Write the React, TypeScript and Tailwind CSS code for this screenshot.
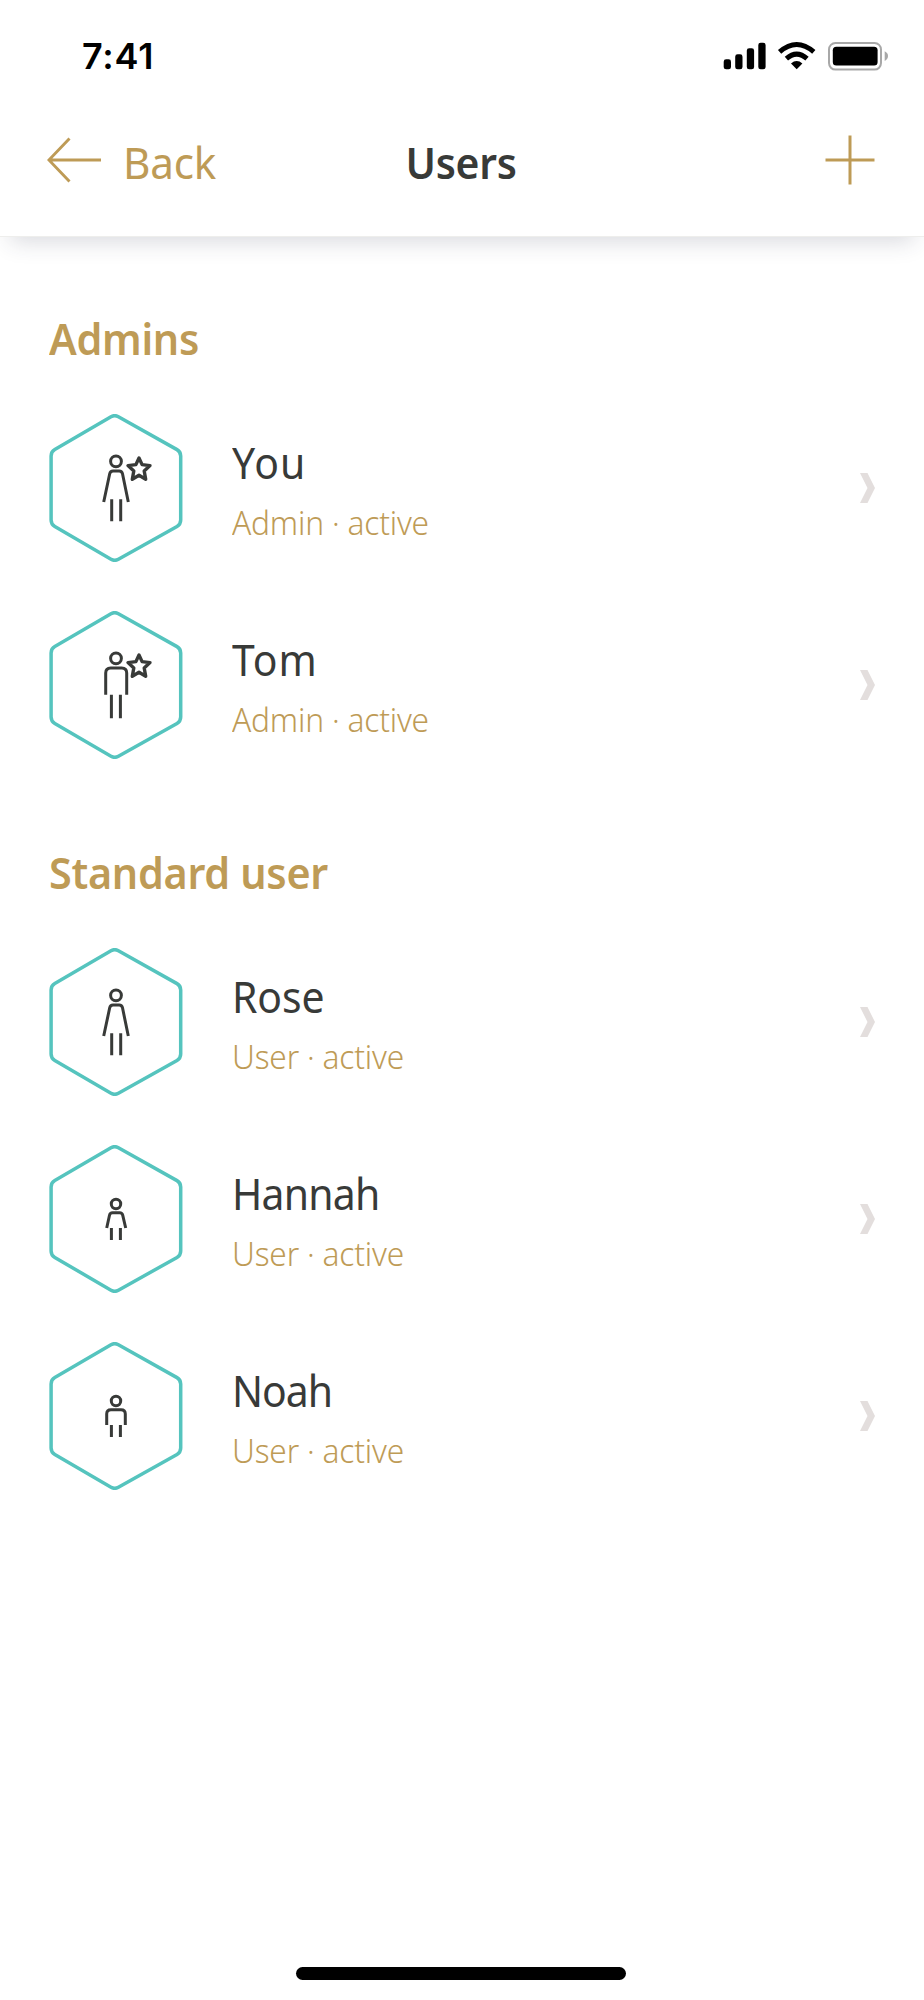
type Figure = "woman" | "man" | "girl" | "boy";

interface User {
  name: string;
  role: string;
  figure: Figure;
  star?: boolean;
  spacing: string;
}

const admins: User[] = [
  { name: "You", role: "Admin · active", figure: "woman", star: true, spacing: "tracking-[1.2px]" },
  { name: "Tom", role: "Admin · active", figure: "man", star: true, spacing: "tracking-[1px]" },
];

const standardUsers: User[] = [
  { name: "Rose", role: "User · active", figure: "woman", spacing: "tracking-[-0.1px]" },
  { name: "Hannah", role: "User · active", figure: "girl", spacing: "tracking-[-0.8px]" },
  { name: "Noah", role: "User · active", figure: "boy", spacing: "tracking-[-1.1px]" },
];

const figures: Record<Figure, { head: [number, number]; body: string; legs: string }> = {
  woman: {
    head: [47.3, 5.4],
    body: "M54.7 88 L60.7 59.8 Q61.3 57 64 57 H70.2 Q72.9 57 73.5 59.8 L79.3 88",
    legs: "M62.7 85.3 V107.3 M71.7 85.3 V107.3",
  },
  man: {
    head: [47.3, 5.4],
    body: "M56.7 83.7 V62 Q56.7 57 61.7 57 H72.7 Q77.7 57 77.7 62 V83.7",
    legs: "M62.4 83.7 V107.3 M71.4 83.7 V107.3",
  },
  girl: {
    head: [59, 4.7],
    body: "M57.7 83 L60.5 70.2 Q61.1 67.7 63.5 67.7 H70.7 Q73.1 67.7 73.7 70.2 L76.7 83",
    legs: "M62.4 83 V95 M71.4 83 V95",
  },
  boy: {
    head: [59, 4.7],
    body: "M57.7 83 V72 Q57.7 67.7 62 67.7 H72 Q76.3 67.7 76.3 72 V83",
    legs: "M62.4 83 V95 M71.4 83 V95",
  },
};

const Avatar = ({ figure, star }: { figure: Figure; star?: boolean }) => {
  const { head, body, legs } = figures[figure];
  return (
    <svg width="134" height="148" viewBox="0 0 134 148" fill="none" className="shrink-0">
      <path
        d="M62 2.7 Q65.7 .6 69.4 2.7 L128 35.6 Q131.7 37.7 131.7 42 V106 Q131.7 110.3 128 112.4 L69.4 145.3 Q65.7 147.4 62 145.3 L5.8 112.4 Q2.1 110.3 2.1 106 V42 Q2.1 37.7 5.8 35.6 Z"
        stroke="#55c4be"
        strokeWidth="3.5"
      />
      <g stroke="#383a38" strokeWidth="3">
        <circle cx="67" cy={head[0]} r={head[1]} />
        <path d={body} />
        <path d={legs} />
        {star && (
          <path
            d="M90 44 L93.1 50.6 L101 51.6 L95.2 57 L96.7 65.3 L90 61.3 L83.3 65.3 L84.8 57 L79 51.6 L86.9 50.6 Z"
            strokeLinejoin="round"
            strokeWidth="3.4"
          />
        )}
      </g>
    </svg>
  );
};

const StatusBar = () => {
  return (
    <div className="flex h-[112px] items-center justify-between pr-[34px] pl-[82px]">
      <span className="font-['Inter'] text-[36px] leading-none font-semibold tracking-[0.8px] text-black">
        7:41
      </span>
      <svg width="168" height="30" viewBox="0 0 168 30">
        <rect x="1.7" y="18.3" width="7.3" height="10" rx="2.4" />
        <rect x="13.2" y="13.3" width="7.3" height="15" rx="2.4" />
        <rect x="24.8" y="7.3" width="7.3" height="21" rx="2.4" />
        <rect x="36.3" y="1.7" width="7.3" height="26.6" rx="2.4" />
        <g fill="none" stroke="#000" strokeWidth="5">
          <path d="M57.6 10.9 Q74.7 -3.9 91.8 10.9" />
          <path d="M64.4 17.7 Q74.7 8.7 85 17.7" />
        </g>
        <path d="M69 22.5 Q74.7 17.7 80.4 22.5 L74.7 28.3 Z" />
        <rect x="107" y="2" width="52" height="26.6" rx="6.5" fill="none" stroke="#a8a8a8" strokeWidth="2" />
        <rect x="110.8" y="5.7" width="44.8" height="18.8" rx="3.5" />
        <path d="M162.7 10.3 Q166 11.9 166 15 Q166 18.1 162.7 19.9 Z" fill="#a8a8a8" />
      </svg>
    </div>
  );
};

const Header = () => {
  return (
    <header className="h-[237px] border-b border-[#eeeeec] bg-white shadow-[0_14px_22px_-10px_rgba(40,50,75,0.19)]">
      <StatusBar />
      <div className="grid h-24 grid-cols-3 items-center pr-[49px] pl-[47px]">
        <div className="flex items-center text-[#be9b56]">
          <svg width="54" height="46" viewBox="0 0 54 46" fill="none" stroke="currentColor" strokeWidth="2.9">
            <path d="M2 23 H54 M22.5 1.5 L1.9 23 L22.5 44.5" />
          </svg>
          <span className="origin-left scale-x-[0.96] pt-[3px] pl-[23px] text-[44px] leading-none tracking-[-0.3px]">
            Back
          </span>
        </div>
        <h1 className="scale-x-[0.93] pt-[3px] text-center text-[44px] leading-none font-semibold tracking-[-0.3px] text-[#383a38]">
          Users
        </h1>
        <svg width="50" height="50" viewBox="0 0 50 50" stroke="#be9b56" strokeWidth="3" className="justify-self-end">
          <path d="M25 .5 V49.5 M.5 25 H49.5" />
        </svg>
      </div>
    </header>
  );
};

const UserRow = ({ user }: { user: User }) => {
  return (
    <li className="flex h-[197px] items-center">
      <Avatar figure={user.figure} star={user.star} />
      <div className="grow pt-[10px] pl-[49px]">
        <p className={`origin-left scale-x-[0.94] text-[43.5px] leading-[60px] text-[#383a38] ${user.spacing}`}>
          {user.name}
        </p>
        <p className="origin-left scale-x-[0.96] pt-px text-[33px] leading-[60px] font-light tracking-[-0.2px] text-[#be9b56]">
          {user.role}
        </p>
      </div>
      <svg width="15" height="30" viewBox="0 0 15 30" fill="#e3dedd">
        <path d="M0 0 H7.5 L15 15 L7.5 30 H0 L7.5 15 Z" />
      </svg>
    </li>
  );
};

const Section = ({ title, users }: { title: string; users: User[] }) => {
  return (
    <section className="px-[49px]">
      <h2 className="h-[140px] origin-left scale-x-[0.95] pt-[59px] text-[43.5px] leading-[60px] font-semibold tracking-[-0.3px] text-[#be9b56]">
        {title}
      </h2>
      <ul>
        {users.map((user) => (
          <UserRow key={user.name} user={user} />
        ))}
      </ul>
    </section>
  );
};

const App = () => {
  return (
    <div className="flex h-[2000px] w-[924px] flex-col bg-white font-['Noto_Sans',sans-serif]">
      <Header />
      <main className="grow pt-[12px]">
        <Section title="Admins" users={admins} />
        <Section title="Standard user" users={standardUsers} />
      </main>
      <div className="mb-5 ml-[296px] h-[13px] w-[330px] rounded-full bg-black" />
    </div>
  );
};

export default App;
